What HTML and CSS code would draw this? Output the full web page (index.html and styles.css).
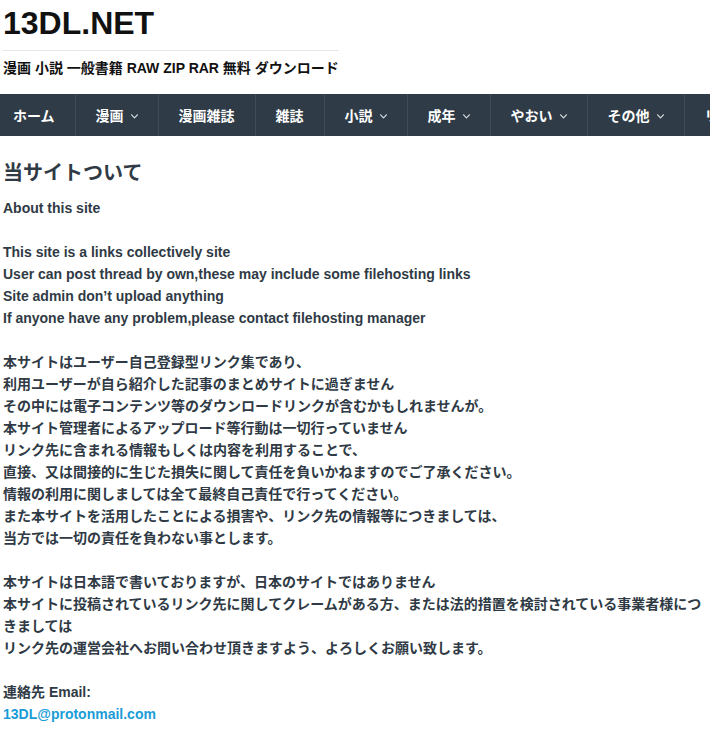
FILE: index.html
```html
<!DOCTYPE html>
<html lang="ja">
<head>
<meta charset="utf-8">
<title>13DL.NET - 当サイトついて</title>
<link rel="stylesheet" href="styles.css">
</head>
<body>
<header class="site-header">
  <div class="brand">
    <h1 class="site-title">13DL.NET</h1>
    <p class="tagline">漫画 小説 一般書籍 RAW ZIP RAR 無料 ダウンロード</p>
  </div>
</header>
<nav class="main-nav">
  <ul class="menu">
    <li class="menu-item first"><a href="#">ホーム</a></li>
    <li class="menu-item"><a href="#">漫画<svg class="chev" viewBox="0 0 7 5" width="7" height="5"><path d="M0.6 0.8 L3.5 3.8 L6.4 0.8"/></svg></a></li>
    <li class="menu-item"><a href="#">漫画雑誌</a></li>
    <li class="menu-item"><a href="#">雑誌</a></li>
    <li class="menu-item"><a href="#">小説<svg class="chev" viewBox="0 0 7 5" width="7" height="5"><path d="M0.6 0.8 L3.5 3.8 L6.4 0.8"/></svg></a></li>
    <li class="menu-item"><a href="#">成年<svg class="chev" viewBox="0 0 7 5" width="7" height="5"><path d="M0.6 0.8 L3.5 3.8 L6.4 0.8"/></svg></a></li>
    <li class="menu-item"><a href="#">やおい<svg class="chev" viewBox="0 0 7 5" width="7" height="5"><path d="M0.6 0.8 L3.5 3.8 L6.4 0.8"/></svg></a></li>
    <li class="menu-item"><a href="#">その他<svg class="chev" viewBox="0 0 7 5" width="7" height="5"><path d="M0.6 0.8 L3.5 3.8 L6.4 0.8"/></svg></a></li>
    <li class="menu-item"><a href="#">リクエスト</a></li>
  </ul>
</nav>
<main class="content">
  <h2 class="page-title">当サイトついて</h2>
  <div class="entry">
    <p>About this site</p>
    <p>This site is a links collectively site<br>
    User can post thread by own,these may include some filehosting links<br>
    Site admin don’t upload anything<br>
    If anyone have any problem,please contact filehosting manager</p>
    <p>本サイトはユーザー自己登録型リンク集であり、<br>
    利用ユーザーが自ら紹介した記事のまとめサイトに過ぎません<br>
    その中には電子コンテンツ等のダウンロードリンクが含むかもしれませんが。<br>
    本サイト管理者によるアップロード等行動は一切行っていません<br>
    リンク先に含まれる情報もしくは内容を利用することで、<br>
    直接、又は間接的に生じた損失に関して責任を負いかねますのでご了承ください。<br>
    情報の利用に関しましては全て最終自己責任で行ってください。<br>
    また本サイトを活用したことによる損害や、リンク先の情報等につきましては、<br>
    当方では一切の責任を負わない事とします。</p>
    <p>本サイトは日本語で書いておりますが、日本のサイトではありません<br>
    本サイトに投稿されているリンク先に関してクレームがある方、または法的措置を検討されている事業者様につきましては<br>
    リンク先の運営会社へお問い合わせ頂きますよう、よろしくお願い致します。</p>
    <p>連絡先 Email:<br>
    <a class="mail" href="#">13DL@protonmail.com</a></p>
  </div>
</main>
</body>
</html>
```

FILE: styles.css
```css
html, body {
  margin: 0;
  padding: 0;
  background: #ffffff;
}

body {
  font-family: "Liberation Sans", "Noto Sans CJK JP", sans-serif;
  font-weight: 700;
  color: #2f3a45;
  overflow: hidden;
}

.site-header {
  padding: 0 3px;
}

.brand {
  display: inline-block;
}

.site-title {
  margin: 0;
  padding: 3px 0 7px;
  font-size: 32px;
  line-height: 40px;
  font-weight: 700;
  color: #111111;
  border-bottom: 1px solid #e6e6e6;
}

.tagline {
  margin: 6px 0 0;
  font-size: 14px;
  line-height: 22px;
  color: #111111;
}

.main-nav {
  margin-top: 15px;
  background: #2f3c47;
  height: 42px;
  overflow: hidden;
}

.menu {
  list-style: none;
  margin: 0;
  padding: 0;
  display: flex;
  white-space: nowrap;
}

.menu-item {
  flex: none;
  border-right: 1px solid #3f4d59;
}

.menu-item a {
  display: flex;
  align-items: center;
  height: 42px;
  padding: 0 20px;
  font-size: 14px;
  color: #ffffff;
  text-decoration: none;
}

.menu-item.first a {
  padding-left: 13px;
}

.chev {
  margin-left: 7px;
  margin-top: 3px;
  fill: none;
  stroke: #d6dbe0;
  stroke-width: 1.2;
  stroke-linecap: round;
  stroke-linejoin: round;
}

.content {
  padding: 0 3px;
}

.page-title {
  margin: 23px 0 10px;
  font-size: 20px;
  line-height: 28px;
  font-weight: 700;
  color: #2f3a45;
}

.entry {
  font-size: 14px;
  line-height: 22px;
}

.entry p {
  margin: 0 0 22px;
}

.mail {
  color: #1a9cd8;
  text-decoration: none;
}
```
